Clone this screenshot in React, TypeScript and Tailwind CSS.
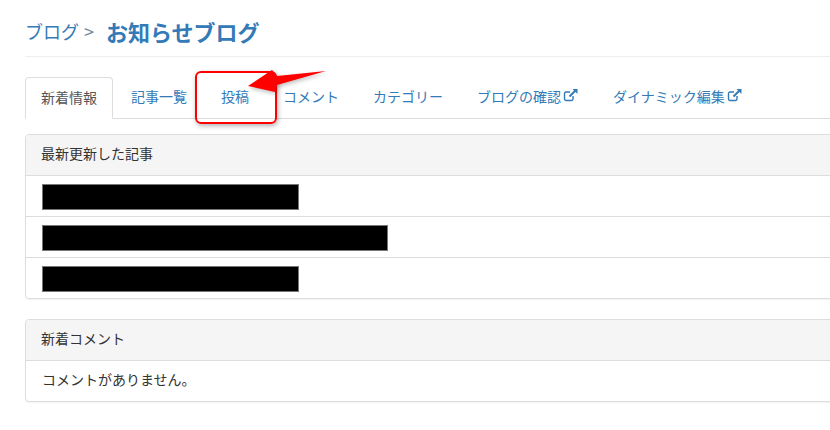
const font = { fontFamily: '"Noto Sans CJK JP", "Liberation Sans", sans-serif' };

const tabs = [
  { name: '新着情報', active: true },
  { name: '記事一覧' },
  { name: '投稿' },
  { name: 'コメント' },
  { name: 'カテゴリー' },
  { name: 'ブログの確認', external: true },
  { name: 'ダイナミック編集', external: true },
];

const redacted = ['w-[257px]', 'w-[346px]', 'w-[257px]'];

function ExternalIcon() {
  return (
    <svg className="ml-[2px] -mt-[3px]" width="16" height="14" viewBox="0 0 16 14" fill="none" stroke="#337ab7">
      <path d="M10 8 V11 A1.5 1.5 0 0 1 8.5 12.5 H3 A1.5 1.5 0 0 1 1.5 11 V5.5 A1.5 1.5 0 0 1 3 4 H7" strokeWidth="1.4" />
      <path d="M6.5 8.5 L12.5 2.5" strokeWidth="2" />
      <path d="M9.5 1 H14.5 V6 Z" fill="#337ab7" stroke="none" />
    </svg>
  );
}

export default function App() {
  return (
    <div className="relative w-[830px] h-[430px] overflow-hidden bg-white text-[14px] leading-5 text-[#333]" style={font}>
      <div className="w-[900px] pl-[25px]">
        {/* Page title */}
        <div className="h-[57px] border-b border-[#eee] pt-[16px] flex items-start text-[#337ab7]">
          <span className="text-[18px] leading-[30px]">ブログ</span>
          <span className="text-[18px] leading-[30px] ml-[5px] text-[#6f8aa0]">&gt;</span>
          <h1 className="text-[22px] leading-[30px] font-bold ml-[12px]">お知らせブログ</h1>
        </div>

        {/* Tabs */}
        <ul className="flex mt-5 border-b border-[#ddd] h-[42px]">
          {tabs.map((tab) => (
            <li key={tab.name} className="mr-[2px]">
              <a
                className={
                  tab.active
                    ? 'flex items-center h-[42px] px-[15px] pb-[3px] border border-[#ddd] border-b-white rounded-t bg-white text-[#555]'
                    : 'flex items-center h-[41px] px-[15px] pb-[3px] border border-transparent text-[#337ab7]'
                }
              >
                {tab.name}
                {tab.external && <ExternalIcon />}
              </a>
            </li>
          ))}
        </ul>

        {/* Latest posts */}
        <section className="mt-[15px] border border-[#ddd] rounded shadow-[0_1px_1px_rgba(0,0,0,0.05)]">
          <h2 className="h-[41px] px-[15px] pt-[8px] bg-[#f5f5f5] border-b border-[#ddd] rounded-t">最新更新した記事</h2>
          <ul>
            {redacted.map((width, i) => (
              <li key={i} className={`px-[16px] pt-[8px] ${i < 2 ? 'h-[41px] border-b border-[#ddd]' : 'h-[40px]'}`}>
                <div className={`${width} h-[26px] bg-black border border-[#777]`} />
              </li>
            ))}
          </ul>
        </section>

        {/* Latest comments */}
        <section className="mt-[20px] border border-[#ddd] rounded shadow-[0_1px_1px_rgba(0,0,0,0.05)]">
          <h2 className="h-[41px] px-[15px] pt-[8px] bg-[#f5f5f5] border-b border-[#ddd] rounded-t">新着コメント</h2>
          <p className="h-[40px] px-[16px] pt-[8px]">コメントがありません。</p>
        </section>
      </div>

      {/* Red annotation */}
      <div className="absolute left-[195px] top-[71px] w-[82px] h-[53px] border-2 border-[#f00] rounded-[6px] shadow-[1px_2px_5px_rgba(0,0,0,0.3)]" />
      <svg className="absolute left-0 top-0 drop-shadow-[1px_2px_2px_rgba(0,0,0,0.25)]" width="830" height="430">
        <path d="M248 86 L272 70 L277 76 L326 71 L277 85 L275 92 Z" fill="#f00" />
      </svg>
    </div>
  );
}
